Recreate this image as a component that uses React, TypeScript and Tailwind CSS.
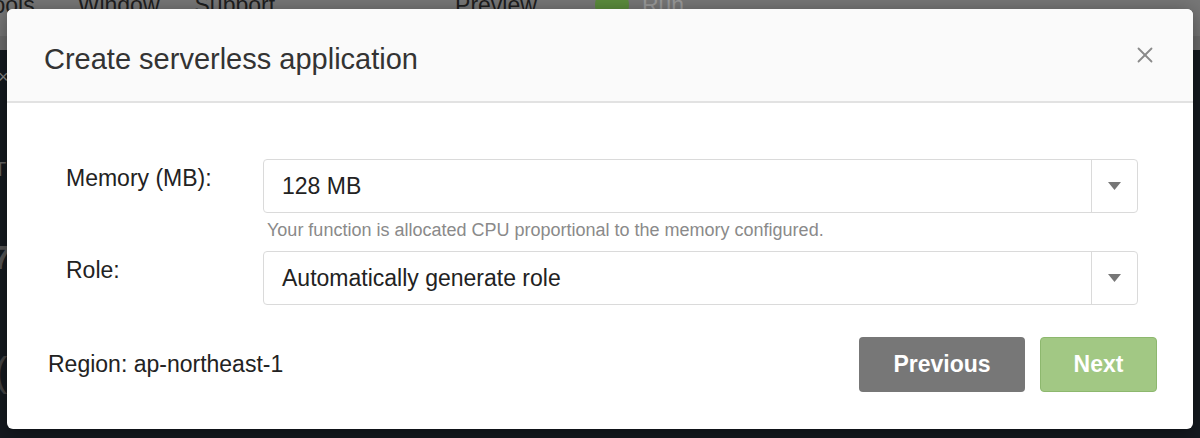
import { X } from "lucide-react";

function Caret() {
  return (
    <svg width="13" height="8" viewBox="0 0 13 8" className="block">
      <path d="M0 0 H13 L6.5 8 Z" fill="#777777" />
    </svg>
  );
}

function SelectBox({ value }: { value: string }) {
  return (
    <div className="flex h-[54px] w-full shrink-0 rounded-[4px] border border-[#dadada] bg-white">
      <div className="flex flex-1 items-center pl-[18px] text-[23px] text-[#222]">{value}</div>
      <div className="flex w-[46px] items-center justify-center border-l border-[#dadada]">
        <Caret />
      </div>
    </div>
  );
}

export default function App() {
  return (
    <div
      className="relative h-[438px] w-[1200px] overflow-hidden bg-[#151a20]"
      style={{ fontFamily: '"Liberation Sans", Arial, sans-serif' }}
    >
      {/* app behind the dialog */}
      <div className="absolute inset-x-0 top-0 h-[36px] bg-[#777777]" />
      <div className="absolute inset-x-0 top-[36px] h-[14px] bg-[#6d6d6d]" />
      <div className="absolute left-0 top-[-12px] flex items-center text-[23px] leading-[26px] text-[#1e1e1e]">
        <span className="ml-[-19px]">Tools</span>
        <span className="ml-[43px]">Window</span>
        <span className="ml-[35px]">Support</span>
        <span className="ml-[180px]">Preview</span>
        <span className="ml-[58px] h-[34px] w-[34px] rounded-full bg-[#5b8c3c]" />
        <span className="ml-[13px] text-[#9a9a9a]">Run</span>
      </div>
      <span className="absolute left-[-2px] top-[64px] text-[18px] text-[#888]">×</span>
      <span className="absolute left-[-6px] top-[154px] text-[20px] text-[#666]">T</span>
      <span className="absolute left-[-8px] top-[232px] text-[34px] font-bold text-[#555]">7</span>
      <span className="absolute left-[-6px] top-[342px] text-[40px] text-[#444]">(</span>

      {/* dialog */}
      <div className="absolute left-[7px] top-[9px] w-[1186px] overflow-hidden rounded-[6px] bg-white shadow-[0_4px_20px_rgba(0,0,0,0.4)]">
        <div className="flex h-[94px] items-center justify-between border-b-2 border-[#e2e2e2] bg-[#fafafa] pl-[37px] pr-[35px]">
          <h1 className="pt-[10px] text-[29px] font-normal text-[#333]">Create serverless application</h1>
          <X className="h-[26px] w-[26px] text-[#8a8a8a]" strokeWidth={1.7} />
        </div>

        <div className="pl-[59px] pr-[55px] pt-[56px]">
          <div className="flex">
            <label className="w-[197px] shrink-0 pt-[5px] text-[23px] leading-[28px] text-[#222]">Memory (MB):</label>
            <div className="flex flex-1 flex-col">
              <SelectBox value="128 MB" />
              <p className="ml-[4px] mt-[6px] text-[18px] leading-[22px] text-[#8a8a8a]">
                Your function is allocated CPU proportional to the memory configured.
              </p>
            </div>
          </div>
          <div className="mt-[10px] flex">
            <label className="w-[197px] shrink-0 pt-[5px] text-[23px] leading-[28px] text-[#222]">Role:</label>
            <div className="flex flex-1">
              <SelectBox value="Automatically generate role" />
            </div>
          </div>
        </div>

        <div className="flex items-center justify-between pb-[37px] pl-[41px] pr-[36px] pt-[32px]">
          <span className="text-[23px] text-[#222]">Region: ap-northeast-1</span>
          <div className="flex gap-[15px]">
            <button className="h-[55px] w-[166px] rounded-[4px] bg-[#777777] text-[23px] font-bold text-white">
              Previous
            </button>
            <button className="h-[55px] w-[117px] rounded-[4px] border border-[#8db86e] bg-[#a2c884] text-[23px] font-bold text-white">
              Next
            </button>
          </div>
        </div>
      </div>
    </div>
  );
}
